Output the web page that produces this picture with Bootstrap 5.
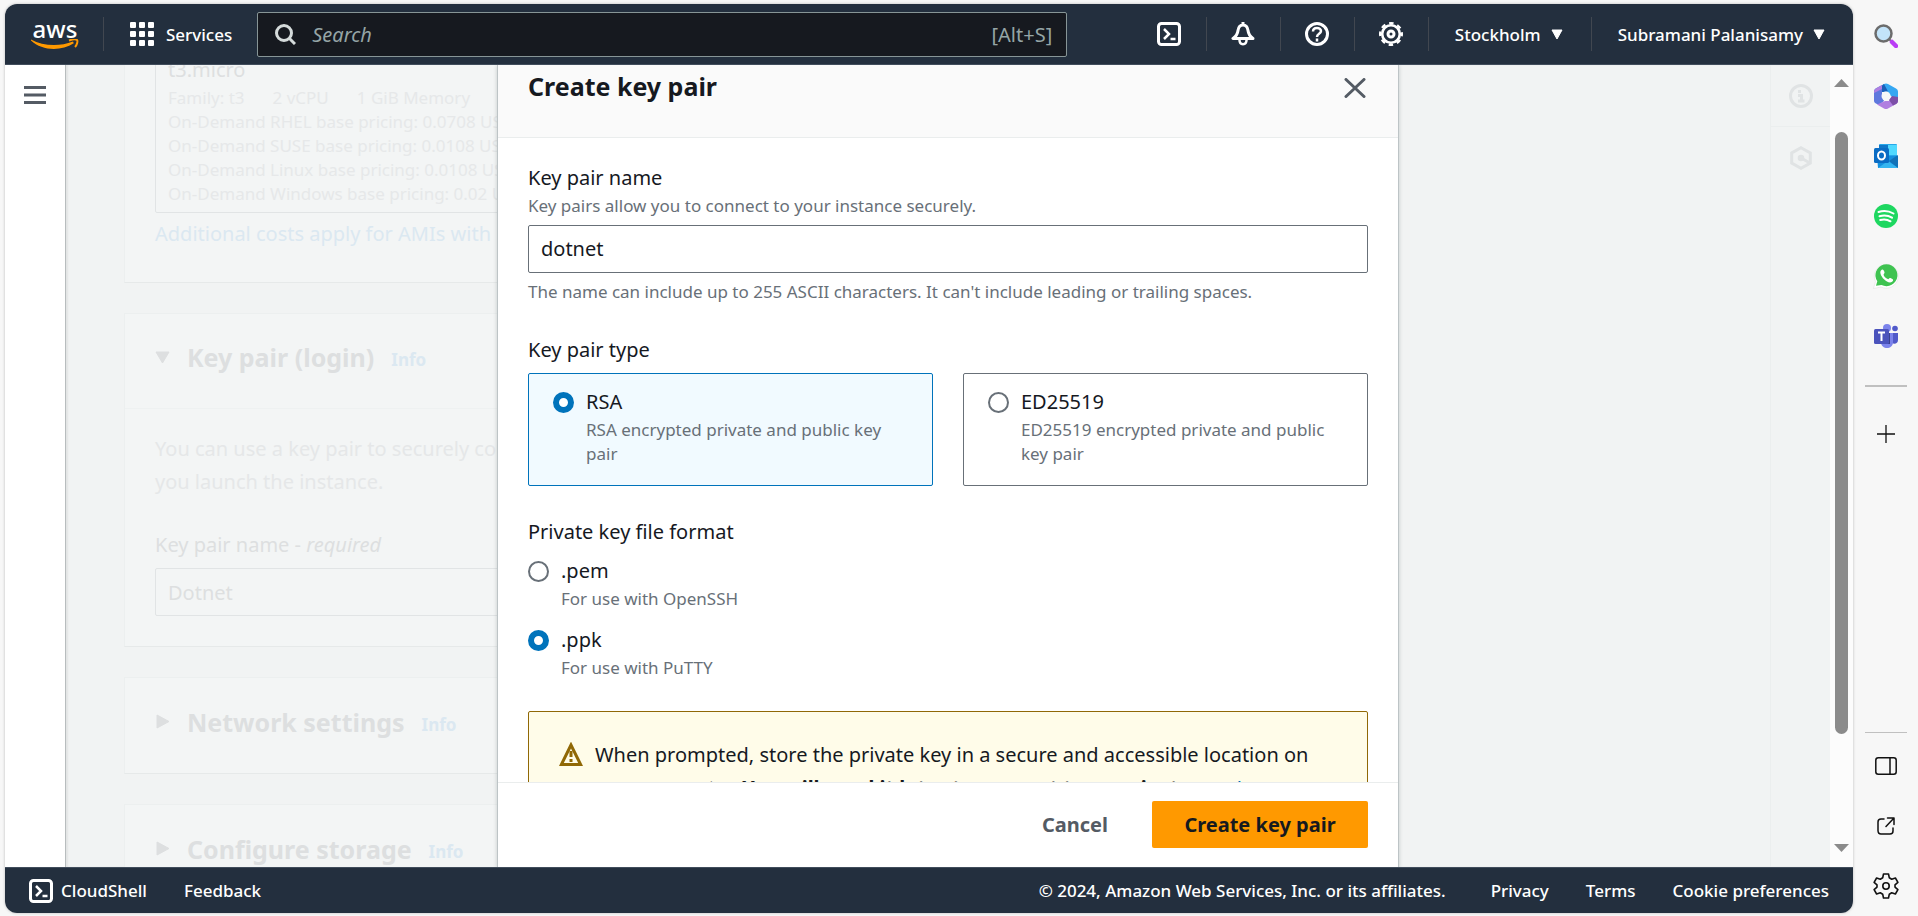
<!DOCTYPE html>
<html lang="en">
<head>
<meta charset="utf-8">
<meta name="viewport" content="width=device-width, initial-scale=1">
<title>Launch an instance | EC2</title>
<link href="https://cdn.jsdelivr.net/npm/bootstrap@5.3.0/dist/css/bootstrap.min.css" rel="stylesheet">
<style>
  body { font-family: "Noto Sans", "Open Sans", sans-serif; font-size: 20px; line-height: 33px; color: #16191f; background: #f7f7f7; }
  button { font: inherit; color: inherit; background: none; border: 0; padding: 0; }
  svg { display: block; flex: none; }
  a { text-decoration: none; }

  /* browser frame */
  .frame { margin: 4px 0 3px 5px; border-radius: 12px; background: #fff; box-shadow: 0 0 3px rgba(0,0,0,.25); }
  .edge-bar { width: 65px; padding-top: 6px; }
  .edge-bar button { height: 60px; width: 100%; display: flex; align-items: center; justify-content: center; }
  .edge-line { width: 42px; height: 2px; background: #c0c0c0; margin: 19px auto 17px; }
  .edge-line.thin { height: 1px; margin: 0 auto 3px; }

  /* console top and bottom bars */
  .topbar { height: 61px; background: #232f3e; color: #fff; border-bottom: 1px solid #414d5c; font-size: 17px; font-weight: 500; padding: 0 28px 0 26px; }
  .topbar .sep { width: 1px; height: 34px; background: #414750; }
  .brand { font-size: 24px; line-height: 20px; width: 48px; color: #fff; }
  .services-btn { margin: 0 25px 0 26px; }
  .region-btn { margin: 0 28px 0 26px; gap: 10px; }
  .account-btn { margin-left: 26px; gap: 10px; }
  .search-box { width: 810px; height: 45px; background: #16191f; border: 1px solid #879596; border-radius: 2px; padding: 0 14px 0 17px; color: #95a5a6; font-size: 20px; font-weight: 400; }
  .search-box input { background: none; border: 0; outline: 0; color: inherit; font-style: italic; padding: 0; min-width: 0; }
  .search-box input::placeholder { color: #95a5a6; opacity: 1; }
  .icon-slot { width: 73px; display: flex; justify-content: center; }
  .bottombar { height: 46px; background: #232f3e; border-top: 1px solid #414d5c; font-size: 17px; font-weight: 500; color: #fff; padding: 0 24px; gap: 37px; }
  .bottombar a { color: #fff; }

  /* page behind the dialog */
  .rail { width: 61px; border-right: 1px solid #b8bdbe; padding-top: 21px; }
  .stage { background: #f1f3f3; box-shadow: inset 2px 0 2px rgba(0,0,0,.06); }
  .behind { width: 70%; padding-left: 58px; color: #dddfe0; }
  .pane { background: #f3f5f5; border: 1px solid #ecefef; border-bottom-color: #e6e9e9; padding: 0 30px; margin-bottom: 30px; flex: none; }
  .pane.scrolled { margin-top: -28px; padding-bottom: 32px; }
  .pane-head { height: 95px; font-size: 25px; font-weight: 700; gap: 17px; margin: 0 -30px; padding: 0 30px 8px; }
  .pane-head.ruled { border-bottom: 1px solid #eef1f1; }
  .pane-head a, .faint-link { color: #dbe8f1; }
  .pane-head a { font-size: 17px; padding-top: 7px; }
  .faint { color: #e5e7e8; padding-top: 23px; margin-bottom: 30px; }
  .faint-box { border: 1px solid #e1e4e5; border-radius: 2px; padding: 10px 12px 6px; }
  .specs { font-size: 17px; line-height: 24px; color: #e6e8e9; }
  .specs span { margin-right: 28px; }
  .faint-input { display: block; height: 48px; width: 100%; background: none; color: #dddfe0; padding: 0 12px; margin: 7px 0 30px; }
  .tools { width: 60px; border-left: 1px solid #ebeeee; padding-top: 1px; }
  .tools button { width: 100%; height: 61px; display: flex; align-items: center; justify-content: center; border-bottom: 1px solid #ebeeee; }
  .tools button + button { border: 0; }

  /* page scrollbar */
  .track { width: 23px; background: #fcfcfc; padding: 14px 0 15px; }
  .thumb { width: 13px; border-radius: 7px; background: #8b8b8b; flex: 602 0 0; margin-top: 45px; }
  .track-rest { flex: 110 0 0; }

  /* dialog */
  .shade { position: absolute; inset: 0; display: flex; justify-content: center; }
  .dialog-panel { width: 902px; max-width: 100%; background: #fff; border: 1px solid #bdc4c6; border-width: 0 1px; box-shadow: 0 1px 4px rgba(0,28,36,.2); }
  .dialog-head { background: #fafafa; border-bottom: 1px solid #eaeded; height: 73px; padding: 5px 32px 0 30px; }
  .dialog-head h1 { font-size: 25px; line-height: 32px; font-weight: 700; margin: 0; }
  .dialog-body { padding: 23px 30px 0; min-height: 0; overflow: hidden; }
  .dialog-body fieldset, .dialog-body .field { margin-bottom: 29px; }
  .dialog-body legend, .dialog-body label { font-size: 20px; line-height: 33px; margin: 0; float: none; }
  .hint { font-size: 17px; line-height: 24px; color: #687078; }
  .text-field { display: block; width: 100%; height: 48px; border: 1px solid #687078; border-radius: 2px; padding: 0 12px 2px; margin: 7px 0; color: #16191f; }
  .form-check-input { width: 21px; height: 21px; margin: 0; border: 2px solid #687078; float: none; flex: none; }
  .form-check-input:checked { border: 6px solid #0073bb; background: #fff; }
  .tiles { display: grid; grid-template-columns: 1fr 1fr; gap: 30px; margin-top: 7px; }
  .tile { border: 1px solid #687078; border-radius: 2px; height: 113px; padding: 11px 24px; }
  .tile.chosen { border-color: #0073bb; background: #f1faff; }
  .choice { gap: 12px; }
  .choice .form-check-input { margin-top: 7px; }
  .stack { display: grid; gap: 12px; margin-top: 6px; }
  .caution { border: 1px solid #906806; border-radius: 2px; background: #fffce9; padding: 26px 30px; gap: 12px; margin-top: 31px; }
  .caution a { color: #0073bb; }
  .dialog-foot { height: 85px; border-top: 1px solid #eaeded; padding: 0 30px 2px; gap: 44px; font-weight: 700; }
  .cancel-btn { color: #545b64; }
  .create-btn { background: #ff9900; height: 47px; border-radius: 2px; width: 216px; }
</style>
</head>
<body class="vh-100 d-flex overflow-hidden">

<svg width="0" height="0" class="position-absolute" aria-hidden="true">
  <symbol id="terminal" viewBox="0 0 24 24"><rect x="1.5" y="1.5" width="21" height="21" rx="3" fill="none" stroke="#fff" stroke-width="3"/><path d="M7 7l5 5-5 5M13.500 17h5" fill="none" stroke="#fff" stroke-width="2.500"/></symbol>
</svg>

<div class="frame d-flex flex-column flex-fill overflow-hidden">

  <header class="topbar d-flex align-items-center flex-shrink-0">
    <a href="#" class="brand d-flex flex-column align-items-center">aws
      <svg width="48" height="11" viewBox="0 0 48 11"><path d="M0 .5C12 7 28 8 42 2.500l.8 1.800C30 12.500 11 12 0 1.500z" fill="#f90"/><path d="M38 1.500c3-1 7-1.500 8-.5s0 5-2 7" fill="none" stroke="#f90" stroke-width="2"/></svg>
    </a>
    <span class="sep ms-4"></span>
    <button class="services-btn d-flex align-items-center" type="button">
      <svg width="24" height="24" viewBox="0 0 24 24" fill="#fff" class="me-2"><g id="dots"><rect width="6" height="6" rx="1"/><rect x="9" width="6" height="6" rx="1"/><rect x="18" width="6" height="6" rx="1"/></g><use href="#dots" y="9"/><use href="#dots" y="18"/></svg>
      <span class="ms-1">Services</span>
    </button>
    <div class="search-box d-flex align-items-center">
      <svg width="21" height="21" viewBox="0 0 21 21" fill="none" stroke="#d5dbdb" stroke-width="3"><circle cx="9" cy="9" r="7.500"/><path d="M14 14l6 6"/></svg>
      <input type="search" class="flex-fill ms-3" placeholder="Search" aria-label="Search">
      <span>[Alt+S]</span>
    </div>
    <nav class="d-flex align-items-center ms-auto">
      <button class="icon-slot" type="button" aria-label="CloudShell"><svg width="24" height="24"><use href="#terminal"/></svg></button>
      <span class="sep"></span>
      <button class="icon-slot" type="button" aria-label="Notifications"><svg width="24" height="24" viewBox="0 0 24 24" fill="none" stroke="#fff" stroke-width="3" stroke-linejoin="round"><path d="M12 0v3M2 16.500h20c-3-2-4.500-4-5-8-.5-3.500-2-5.500-5-5.500s-4.500 2-5 5.500c-.5 4-2 6-5 8z"/><path d="M8.500 18c0 5.500 7 5.500 7 0" stroke-width="2.500"/></svg></button>
      <span class="sep"></span>
      <button class="icon-slot" type="button" aria-label="Help"><svg width="24" height="24" viewBox="0 0 24 24" fill="none" stroke="#fff" stroke-width="3"><circle cx="12" cy="12" r="10.500"/><path d="M8 9.500c0-5 8-4.500 8-.5 0 3-4 2.500-4 6M12 16.500v3" stroke-width="2.500"/></svg></button>
      <span class="sep"></span>
      <button class="icon-slot" type="button" aria-label="Settings"><svg width="24" height="24" viewBox="0 0 24 24" fill="none" stroke="#fff"><circle cx="12" cy="12" r="8.800" stroke-width="2.600"/><circle cx="12" cy="12" r="10.800" stroke-width="2.400" stroke-dasharray="4.500 3.982" stroke-dashoffset="2.250"/><circle cx="12" cy="12" r="3" stroke-width="3"/></svg></button>
      <span class="sep"></span>
      <button class="region-btn d-flex align-items-center" type="button">Stockholm
        <svg width="12" height="11" viewBox="0 0 12 11"><path d="M1 1h10l-5 9z" fill="#fff" stroke="#fff"/></svg></button>
      <span class="sep"></span>
      <button class="account-btn d-flex align-items-center" type="button">Subramani Palanisamy
        <svg width="12" height="11" viewBox="0 0 12 11"><path d="M1 1h10l-5 9z" fill="#fff" stroke="#fff"/></svg></button>
    </nav>
  </header>

  <div class="d-flex flex-fill overflow-hidden">
    <aside class="rail d-flex justify-content-center align-items-start flex-shrink-0">
      <button type="button" aria-label="Open navigation"><svg width="22" height="18" viewBox="0 0 22 18" stroke="#545b64" stroke-width="3"><path d="M0 1.500h22M0 9h22M0 16.500h22"/></svg></button>
    </aside>

    <main class="stage position-relative d-flex flex-fill overflow-hidden">
      <div class="behind d-flex flex-column overflow-hidden">
        <section class="pane scrolled">
          <div class="faint-box">
            <div class="pt-1">t3.micro</div>
            <div class="specs text-nowrap">
              <div><span>Family: t3</span><span>2 vCPU</span><span>1 GiB Memory</span><span>Current generation: true</span></div>
              <div>On-Demand RHEL base pricing: 0.0708 USD per Hour</div>
              <div>On-Demand SUSE base pricing: 0.0108 USD per Hour</div>
              <div>On-Demand Linux base pricing: 0.0108 USD per Hour</div>
              <div>On-Demand Windows base pricing: 0.02 USD per Hour</div>
            </div>
          </div>
          <a href="#" class="faint-link d-block mt-1">Additional costs apply for AMIs with pre-installed software</a>
        </section>

        <section class="pane">
          <h2 class="pane-head ruled d-flex align-items-center">
            <svg width="15" height="13" viewBox="0 0 15 13" fill="#dddfe0" stroke="#dddfe0" stroke-linejoin="round"><path d="M1 1h13l-6.500 11z"/></svg>
            Key pair (login) <a href="#">Info</a></h2>
          <p class="faint">You can use a key pair to securely connect to your instance. Ensure that you have access<br>you launch the instance.</p>
          <label for="pair-select" class="d-block">Key pair name - <i>required</i></label>
          <input id="pair-select" class="faint-box faint-input" value="Dotnet">
        </section>

        <section class="pane">
          <h2 class="pane-head d-flex align-items-center">
            <svg width="15" height="15" viewBox="0 0 15 15" fill="#dddfe0" stroke="#dddfe0" stroke-linejoin="round"><path d="M2 1v13l12-6.500z"/></svg>
            Network settings <a href="#">Info</a></h2>
        </section>

        <section class="pane">
          <h2 class="pane-head d-flex align-items-center">
            <svg width="15" height="15" viewBox="0 0 15 15" fill="#dddfe0" stroke="#dddfe0" stroke-linejoin="round"><path d="M2 1v13l12-6.500z"/></svg>
            Configure storage <a href="#">Info</a></h2>
        </section>
      </div>

      <aside class="tools flex-shrink-0 ms-auto">
        <button type="button" aria-label="Info"><svg width="24" height="24" viewBox="0 0 24 24" fill="none" stroke="#e0e3e4" stroke-width="3"><circle cx="12" cy="12" r="10.500"/><path d="M10.500 6v3M9 11.500h3.500V17M9 17h6.500"/></svg></button>
        <button type="button" aria-label="Tutorials"><svg width="24" height="24" viewBox="0 0 24 24" fill="none" stroke="#e0e3e4" stroke-width="3"><path d="M12 1.800l9.300 5.200v10L12 22.200 2.700 17V7z"/><path d="M12 12l9 5"/><circle cx="12" cy="12" r="1.800"/></svg></button>
      </aside>

      <div class="shade">
        <div class="dialog-panel d-flex flex-column" role="dialog" aria-labelledby="dialog-title">
          <div class="dialog-head d-flex justify-content-between align-items-start flex-shrink-0">
            <h1 id="dialog-title">Create key pair</h1>
            <button type="button" class="pt-2" aria-label="Close"><svg width="22" height="20" viewBox="0 0 22 20" stroke="#545b64" stroke-width="3" stroke-linecap="round"><path d="M2 1.500l18 17M20 1.500l-18 17"/></svg></button>
          </div>

          <form class="dialog-body flex-fill">
            <div class="field">
              <label for="pair-name" class="d-block">Key pair name</label>
              <div class="hint">Key pairs allow you to connect to your instance securely.</div>
              <input id="pair-name" class="text-field" value="dotnet">
              <div class="hint">The name can include up to 255 ASCII characters. It can't include leading or trailing spaces.</div>
            </div>

            <fieldset>
              <legend>Key pair type</legend>
              <div class="tiles">
                <div class="tile chosen choice d-flex">
                  <input class="form-check-input" type="radio" name="kind" id="rsa" checked>
                  <div><label for="rsa" class="d-block">RSA</label><div class="hint">RSA encrypted private and public key pair</div></div>
                </div>
                <div class="tile choice d-flex">
                  <input class="form-check-input" type="radio" name="kind" id="ed">
                  <div><label for="ed" class="d-block">ED25519</label><div class="hint">ED25519 encrypted private and public key pair</div></div>
                </div>
              </div>
            </fieldset>

            <fieldset>
              <legend>Private key file format</legend>
              <div class="stack">
                <div class="choice d-flex">
                  <input class="form-check-input" type="radio" name="format" id="pem">
                  <div><label for="pem" class="d-block">.pem</label><div class="hint">For use with OpenSSH</div></div>
                </div>
                <div class="choice d-flex">
                  <input class="form-check-input" type="radio" name="format" id="ppk" checked>
                  <div><label for="ppk" class="d-block">.ppk</label><div class="hint">For use with PuTTY</div></div>
                </div>
              </div>
            </fieldset>

            <div class="caution d-flex">
              <svg width="24" height="24" viewBox="0 0 24 24" class="mt-1" fill="none" stroke="#906806" stroke-width="3"><path d="M12 3L2.400 22.500h19.200z" stroke-linejoin="miter"/><path d="M12 9v6M12 17v3"/></svg>
              <div>When prompted, store the private key in a secure and accessible location on your computer. <b>You will need it later to connect to your instance.</b> <a href="#">Learn more</a></div>
            </div>
          </form>

          <div class="dialog-foot d-flex align-items-center justify-content-end flex-shrink-0">
            <button type="button" class="cancel-btn">Cancel</button>
            <button type="button" class="create-btn">Create key pair</button>
          </div>
        </div>
      </div>
    </main>

    <div class="track d-flex flex-column align-items-center flex-shrink-0">
      <svg width="15" height="8" viewBox="0 0 15 8" fill="#8b8b8b"><path d="M0 8L7.500 0 15 8z"/></svg>
      <div class="thumb"></div>
      <div class="track-rest"></div>
      <svg width="15" height="8" viewBox="0 0 15 8" fill="#8b8b8b"><path d="M0 0h15L7.500 8z"/></svg>
    </div>
  </div>

  <footer class="bottombar d-flex align-items-center flex-shrink-0">
    <a href="#" class="d-flex align-items-center"><svg width="24" height="24" class="me-2"><use href="#terminal"/></svg>CloudShell</a>
    <a href="#" class="me-auto">Feedback</a>
    <span class="me-2">© 2024, Amazon Web Services, Inc. or its affiliates.</span>
    <a href="#">Privacy</a>
    <a href="#">Terms</a>
    <a href="#">Cookie preferences</a>
  </footer>
</div>

<aside class="edge-bar d-flex flex-column flex-shrink-0">
  <button type="button" aria-label="Search"><svg width="24" height="24" viewBox="0 0 24 24"><path d="M15 15l3 3" stroke="#777" stroke-width="2"/><path d="M18 18l4 4" stroke="#b93df5" stroke-width="4.500" stroke-linecap="round"/><circle cx="9.500" cy="9.500" r="8" fill="#c3e4fa" stroke="#6c6c6c" stroke-width="2.500"/></svg></button>
  <button type="button" aria-label="Microsoft 365"><svg width="24" height="26" viewBox="0 0 24 26"><path d="M8 2L1.500 5.500Q0 6.500 0 8v10q0 1.500 1.500 2.300L5 22l5-4-2-5V8z" fill="#5f78dd"/><path d="M8 2L2 5.500C0 7 0 8 0 10l8-4z" fill="#b07fe0"/><path d="M8 9V3q0-1 2-2 2-1 4 0l8 4.500q2 1 2 3V18l-7-5-5-4.500z" fill="#35a7f2"/><path d="M8 9V3q0-1 2-2l4 7.500z" fill="#1b5fb8"/><path d="M24 14v4q0 1.800-1.500 2.700L14 25.500q-2 1-4 0L3 21.500l8-3.500h4l3-4z" fill="#b07fe0"/><path d="M24 14v4q0 1.800-1.500 2.700L19 22.500 15 17l3-4z" fill="#7d4fa8"/><circle cx="12" cy="13" r="4.500" fill="#f7f7f7"/></svg></button>
  <button type="button" aria-label="Outlook"><svg width="24" height="24" viewBox="0 0 24 24"><rect x="5" width="18" height="20" rx="1" fill="#28a8ea"/><path d="M5 1h9v6H5z" fill="#0f78c8"/><path d="M14 1h9v10h-9z" fill="#50d9ff"/><path d="M3 12h21v12H4z" fill="#1490df"/><path d="M24 11v13L15 17z" fill="#1272b8"/><path d="M4 24h20l-10-7z" fill="#35b5f0"/><rect y="4" width="15" height="15" rx="1.500" fill="#0a6cc4"/><ellipse cx="7.500" cy="11.500" rx="3.500" ry="4" fill="none" stroke="#fff" stroke-width="2"/></svg></button>
  <button type="button" aria-label="Spotify"><svg width="24" height="24" viewBox="0 0 24 24"><circle cx="12" cy="12" r="12" fill="#1ed760"/><path d="M4.500 8c5-1.500 10.500-1 15 1.500M5.500 12.200c4.200-1.200 8.800-.8 12.500 1.500M6.200 16c3.600-1 7.200-.6 10.300 1.300" fill="none" stroke="#fff" stroke-width="2" stroke-linecap="round"/></svg></button>
  <button type="button" aria-label="WhatsApp"><svg width="26" height="26" viewBox="0 0 26 26"><path d="M.5 25.500l2-7A12 12 0 1 1 8 24z" fill="#fff" stroke="#ddd" stroke-width=".5"/><path d="M3 22.800l1.300-4.500A11 11 0 1 1 8.500 22z" fill="#3fc351"/><path d="M9 6.500c-3.500 2-.8 7 2 9.800s7 4.700 9 1.500c.5-1.200-.3-1.700-2.500-2.700-1.700-.6-1.200 1.300-2.700 1-2-.7-4-3-4.200-4.400 0-.8 1.300-1.300.9-2.400C10.800 7 10.300 6.300 9 6.500z" fill="#fff"/></svg></button>
  <button type="button" aria-label="Teams"><svg width="24" height="24" viewBox="0 0 24 24"><circle cx="13" cy="4" r="4" fill="#7b83eb"/><circle cx="21" cy="4.500" r="2.800" fill="#5059c9"/><path d="M16 9h8v7c0 5-7 5-8 0z" fill="#5059c9"/><path d="M7 9h12v9c0 8-12 8-12 0z" fill="#7b83eb"/><path d="M7 9h9v11H8z" fill="#3a418f"/><rect y="5" width="15" height="15" rx="1.500" fill="#4b53bc"/><path d="M4 8.500h7M7.500 8.500V17" stroke="#fff" stroke-width="2"/></svg></button>
  <div class="edge-line"></div>
  <button type="button" aria-label="Add"><svg width="18" height="18" viewBox="0 0 18 18" stroke="#111" stroke-width="1.300"><path d="M0 9h18M9 0v18"/></svg></button>
  <div class="edge-line thin mt-auto"></div>
  <button type="button" aria-label="Hide sidebar"><svg width="22" height="18" viewBox="0 0 22 18" fill="none" stroke="#111" stroke-width="1.500"><rect x=".8" y=".8" width="20.400" height="16.400" rx="2.500"/><path d="M15 1v16"/></svg></button>
  <button type="button" aria-label="Open link"><svg width="18" height="18" viewBox="0 0 18 18" fill="none" stroke="#111" stroke-width="1.500" stroke-linecap="round" stroke-linejoin="round"><path d="M7 2H4C2 2 1 3 1 5v8.500C1 16 2 17 4 17h9c2 0 3-1 3-3v-3M10.500 1H17v6.500M17 1L9 9.500"/></svg></button>
  <button type="button" aria-label="Settings"><svg width="26" height="26" viewBox="0 0 26 26" fill="none" stroke="#111" stroke-width="1.600" stroke-linejoin="round"><path d="M10.500 1h5l.8 3.800 2.400 1.400 3.700-1.200 2.500 4.300-2.900 2.600v2.200l2.900 2.600-2.500 4.300-3.700-1.200-2.400 1.400-.8 3.800h-5l-.8-3.800-2.400-1.400L3.600 21l-2.500-4.300L4 14.100v-2.200L1.100 9.300 3.600 5l3.700 1.200 2.400-1.400z"/><circle cx="13" cy="13" r="3.200"/></svg></button>
</aside>

<script src="https://cdn.jsdelivr.net/npm/bootstrap@5.3.0/dist/js/bootstrap.bundle.min.js"></script>
</body>
</html>
